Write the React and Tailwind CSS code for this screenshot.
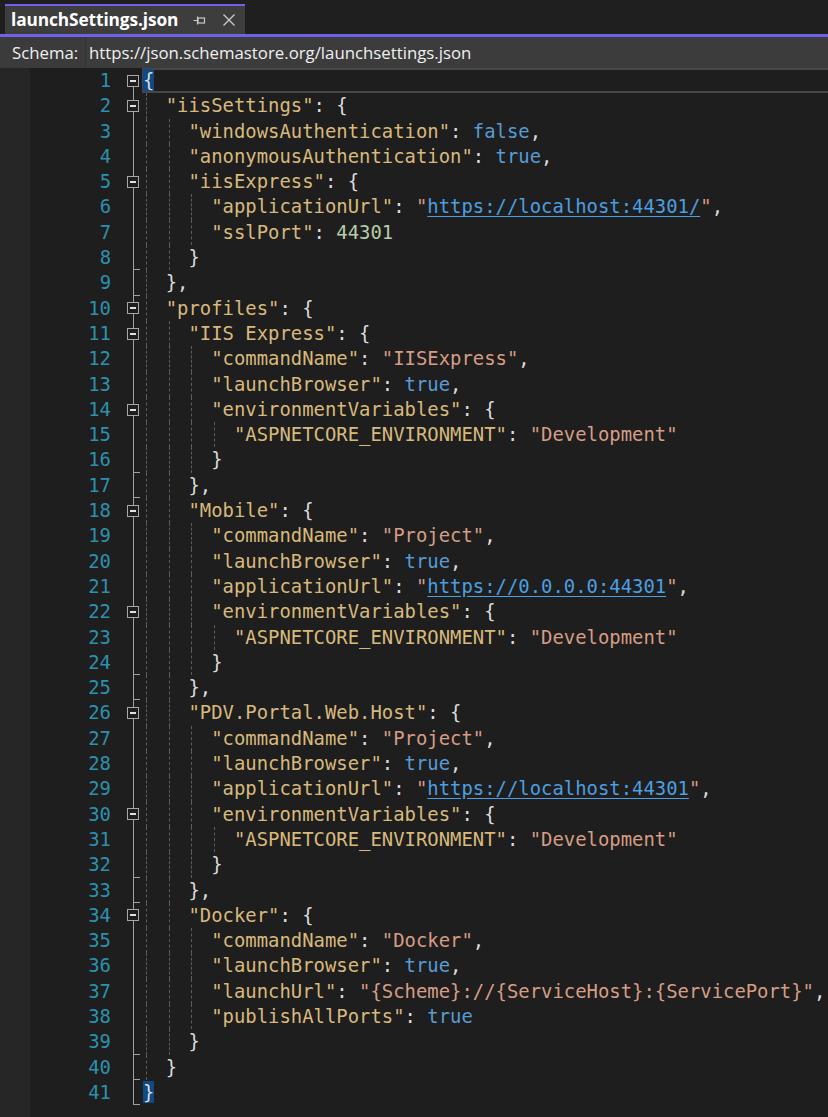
const LINES = [
  '{',
  '  "iisSettings": {',
  '    "windowsAuthentication": false,',
  '    "anonymousAuthentication": true,',
  '    "iisExpress": {',
  '      "applicationUrl": "https://localhost:44301/",',
  '      "sslPort": 44301',
  '    }',
  '  },',
  '  "profiles": {',
  '    "IIS Express": {',
  '      "commandName": "IISExpress",',
  '      "launchBrowser": true,',
  '      "environmentVariables": {',
  '        "ASPNETCORE_ENVIRONMENT": "Development"',
  '      }',
  '    },',
  '    "Mobile": {',
  '      "commandName": "Project",',
  '      "launchBrowser": true,',
  '      "applicationUrl": "https://0.0.0.0:44301",',
  '      "environmentVariables": {',
  '        "ASPNETCORE_ENVIRONMENT": "Development"',
  '      }',
  '    },',
  '    "PDV.Portal.Web.Host": {',
  '      "commandName": "Project",',
  '      "launchBrowser": true,',
  '      "applicationUrl": "https://localhost:44301",',
  '      "environmentVariables": {',
  '        "ASPNETCORE_ENVIRONMENT": "Development"',
  '      }',
  '    },',
  '    "Docker": {',
  '      "commandName": "Docker",',
  '      "launchBrowser": true,',
  '      "launchUrl": "{Scheme}://{ServiceHost}:{ServicePort}",',
  '      "publishAllPorts": true',
  '    }',
  '  }',
  '}',
]

// split a line into coloured pieces
function tokenize(text) {
  const re = /("[^"]*")|(true|false)|(\d+)|([{}:,])|(\s+)/g
  const raw = []
  let m
  while ((m = re.exec(text))) {
    if (m[1]) raw.push({ t: 'str', v: m[1] })
    else if (m[2]) raw.push({ t: 'bool', v: m[2] })
    else if (m[3]) raw.push({ t: 'num', v: m[3] })
    else if (m[4]) raw.push({ t: m[4] === '{' || m[4] === '}' ? 'brace' : 'punct', v: m[4] })
    else raw.push({ t: 'ws', v: m[5] })
  }
  raw.forEach((tok, i) => {
    if (tok.t !== 'str') return
    const next = raw.slice(i + 1).find((x) => x.t !== 'ws')
    if (next && next.v === ':') tok.t = 'key'
  })
  return raw
}

function Token({ tok, hl }) {
  if (tok.t === 'key') return <span className="text-[#d8b97c]">{tok.v}</span>
  if (tok.t === 'bool') return <span className="text-[#569cd6]">{tok.v}</span>
  if (tok.t === 'num') return <span className="text-[#b5cea8]">{tok.v}</span>
  if (tok.t === 'brace')
    return <span className={hl ? 'bg-[#0f4a85] text-[#dcdcdc]' : 'text-[#dcdcdc]'}>{tok.v}</span>
  if (tok.t === 'punct') return <span className="text-[#dcdcdc]">{tok.v}</span>
  if (tok.t === 'str') {
    const inner = tok.v.slice(1, -1)
    if (inner.startsWith('https://'))
      return (
        <span className="text-[#d69d85]">
          "<span className="text-[#4c9fe0] underline underline-offset-[3px]">{inner}</span>"
        </span>
      )
    return <span className="text-[#d69d85]">{tok.v}</span>
  }
  return <span>{tok.v}</span>
}

function Fold({ opens, closes, first }) {
  return (
    <div className="relative w-[31px] shrink-0">
      <span className={`absolute left-[22px] w-px bg-[#a0a0a0] bottom-0 ${first ? 'top-1/2' : 'top-0'}`} />
      {closes && <span className="absolute left-[22px] bottom-0 w-[7px] h-px bg-[#a0a0a0]" />}
      {opens && (
        <span className="absolute left-[16px] top-1/2 -translate-y-1/2 w-[12px] h-[12px] border border-[#a8a8a8] bg-[#1e1e1e] flex items-center justify-center">
          <span className="w-[6px] h-[2px] bg-[#e0e0e0]" />
        </span>
      )}
    </div>
  )
}

function CodeLine({ text, n }) {
  const indent = text.length - text.trimStart().length
  const body = text.trimStart()
  const levels = Math.floor(indent / 2)
  const toks = tokenize(body)
  const trimmed = body.trim()
  const current = n === 1
  return (
    <div className="flex h-[25.3px]">
      <div className="w-[81px] shrink-0 text-right text-[#2b91af] leading-[25.3px]">{n}</div>
      <Fold opens={trimmed.endsWith('{')} closes={trimmed.startsWith('}')} first={n === 1} />
      <div
        className={`flex-1 flex pl-px ${current ? 'shadow-[inset_0_2px_0_#464646,inset_2px_0_0_#464646,inset_0_-2px_0_#464646]' : ''}`}
      >
        {Array.from({ length: levels }).map((_, i) => (
          <span key={i} className="w-[2ch] shrink-0 flex">
            <span className="ml-[3px] border-l border-dashed border-[#5c5c5c]" />
          </span>
        ))}
        <span className="whitespace-pre leading-[25.3px]">
          {toks.map((tok, i) => (
            <Token key={i} tok={tok} hl={n === 1 || n === LINES.length} />
          ))}
        </span>
      </div>
    </div>
  )
}

export default function App() {
  return (
    <div className="h-[1117px] w-[828px] overflow-hidden flex flex-col bg-[#1e1e1e]">
      {/* document tab */}
      <div className="h-[34px] shrink-0 bg-[#1f1f1f] flex items-end pl-[5px]">
        <div className="h-[30px] w-[240px] bg-[#3d3d3d] border-t-2 border-[#7160e8] flex items-center pl-[6px] font-['Open_Sans',sans-serif]">
          <span className="text-white font-bold text-[17.3px] tracking-[-0.1px]">launchSettings.json</span>
          <svg className="ml-[15px]" width="13" height="12" viewBox="0 0 13 12" fill="none" stroke="#c8c8c8" strokeWidth="1.2">
            <path d="M0.5 6.5H4.5M4.5 2.5V10.5" />
            <rect x="5" y="4" width="6.5" height="5" />
          </svg>
          <svg className="ml-[16px]" width="14" height="14" viewBox="0 0 14 14" fill="none" stroke="#c8c8c8" strokeWidth="1.4">
            <path d="M1.5 1.5L12.5 12.5M12.5 1.5L1.5 12.5" />
          </svg>
        </div>
      </div>
      <div className="h-[3px] shrink-0 bg-[#7160e8]" />

      {/* schema bar */}
      <div className="h-[31px] shrink-0 bg-[#3b3b3b] flex items-stretch font-['Open_Sans',sans-serif] text-[16.8px] text-[#f0f0f0]">
        <div className="w-[85px] shrink-0 flex items-center pl-[12px]">Schema:</div>
        <div className="flex-1 flex items-center pl-[3px] border-l border-[#333333] bg-[#3c3c3c]">
          https://json.schemastore.org/launchsettings.json
        </div>
      </div>

      {/* editor */}
      <div className="flex-1 flex font-['DejaVu_Sans_Mono',monospace] text-[18.9px]">
        <div className="w-[30px] shrink-0 bg-[#262626]" />
        <div className="flex-1 flex flex-col">
          {LINES.map((l, i) => (
            <CodeLine key={i} text={l} n={i + 1} />
          ))}
        </div>
      </div>
    </div>
  )
}
